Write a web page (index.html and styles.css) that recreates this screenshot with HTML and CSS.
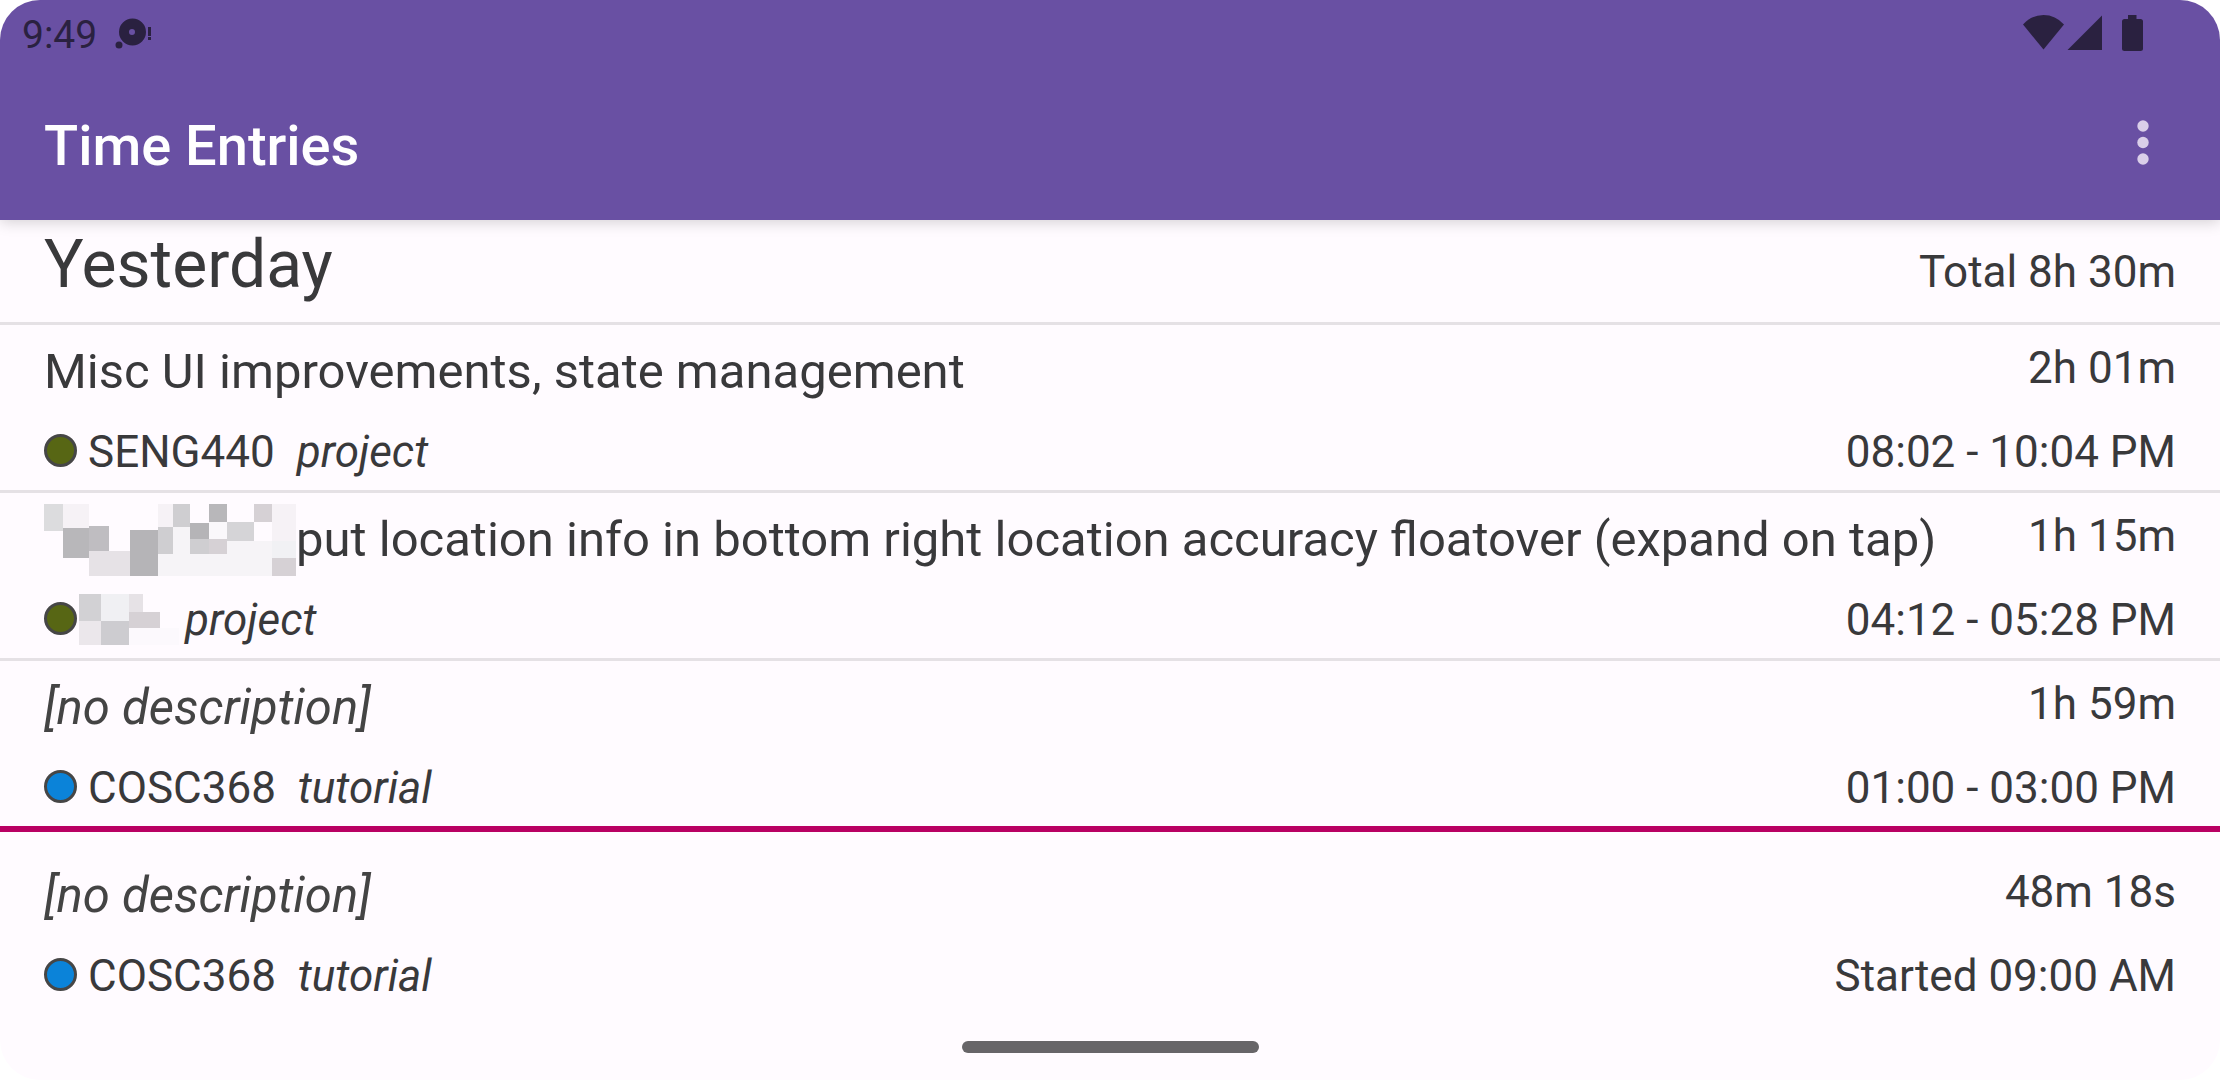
FILE: index.html
```html
<!DOCTYPE html>
<html lang="en">
<head>
<meta charset="utf-8">
<meta name="viewport" content="width=device-width, initial-scale=1">
<title>Time Entries</title>
<link rel="stylesheet" href="styles.css">
</head>
<body>
<div class="screen">
  <header class="top">
    <div class="status">
      <div class="status-left">
        <span class="clock">9:49</span>
        <svg class="notice" width="38" height="32" viewBox="0 0 38 32" aria-hidden="true">
          <path fill-rule="evenodd" d="M17.500 0.500a13.500 13.500 0 1 1 0 27a13.500 13.500 0 1 1 0-27zM17 11a3 3 0 1 0 0 6a3 3 0 1 0 0-6z"/>
          <circle cx="4" cy="27" r="3.500"/>
          <rect x="33" y="9" width="3" height="9"/>
          <rect x="33" y="19" width="3" height="3"/>
        </svg>
      </div>
      <svg class="system" width="122" height="38" viewBox="0 0 122 38" aria-hidden="true">
        <path d="M1 10.500Q9.500 1 21.500 1T42 10.500L21.500 35.500z"/>
        <path d="M45.500 36L80 1.500V36z"/>
        <path d="M106 1h8.500v4H118.500q2.500 0 2.500 2.500V34.500q0 2.500-2.500 2.500H102.500q-2.500 0-2.500-2.500V7.500q0-2.500 2.500-2.500H106z"/>
      </svg>
    </div>
    <div class="appbar">
      <h1 class="title">Time Entries</h1>
      <button class="menu" type="button" aria-label="More options">
        <svg width="12" height="46" viewBox="0 0 12 46" aria-hidden="true">
          <circle cx="6" cy="6" r="5.700"/><circle cx="6" cy="22.500" r="5.700"/><circle cx="6" cy="39" r="5.700"/>
        </svg>
      </button>
    </div>
  </header>

  <main class="content">
    <div class="day">
      <h2 class="day-name">Yesterday</h2>
      <span class="meta">Total 8h 30m</span>
    </div>
    <ul class="entries">
      <li class="entry">
        <div class="line">
          <span class="description">Misc UI improvements, state management</span>
          <span class="meta">2h 01m</span>
        </div>
        <div class="line">
          <span class="project"><span class="dot olive"></span><span class="code">SENG440</span><em class="tag">project</em></span>
          <span class="meta">08:02 - 10:04 PM</span>
        </div>
      </li>
      <li class="entry">
        <div class="line">
          <span class="description with-mosaic">
            <svg class="mosaic" width="252" height="72" viewBox="0 0 252 72" aria-hidden="true">
              <rect width="19" height="27" fill="#dcdcde"/>
              <rect x="19" width="26" height="24" fill="#f6f2f6"/>
              <rect x="19" y="24" width="26" height="30" fill="#b8b7ba"/>
              <rect x="45" y="22" width="20" height="25" fill="#bfbdc1"/>
              <rect x="45" y="47" width="41" height="25" fill="#e6e2e6"/>
              <rect x="86" y="26" width="28" height="46" fill="#b5b4b7"/>
              <rect x="114" width="15" height="23" fill="#f6f2f6"/>
              <rect x="114" y="23" width="15" height="27" fill="#cfced1"/>
              <rect x="129" width="17" height="23" fill="#cfced1"/>
              <rect x="129" y="23" width="17" height="27" fill="#f6f4f7"/>
              <rect x="114" y="50" width="114" height="22" fill="#f6f4f7"/>
              <rect x="146" y="19" width="19" height="16" fill="#b5b4b7"/>
              <rect x="146" y="35" width="19" height="15" fill="#cfced1"/>
              <rect x="165" width="18" height="18" fill="#b8b7ba"/>
              <rect x="165" y="18" width="18" height="17" fill="#faf8fb"/>
              <rect x="165" y="35" width="18" height="15" fill="#d6d1d5"/>
              <rect x="183" y="18" width="27" height="19" fill="#d5d4d7"/>
              <rect x="183" y="37" width="45" height="13" fill="#f6f4f7"/>
              <rect x="210" width="18" height="18" fill="#d6d1d5"/>
              <rect x="228" width="24" height="37" fill="#f6f2f6"/>
              <rect x="228" y="37" width="24" height="17" fill="#f1f1f4"/>
              <rect x="228" y="54" width="24" height="18" fill="#d6d1d5"/>
            </svg>
            <span>put location info in bottom right location accuracy floatover (expand on tap)</span>
          </span>
          <span class="meta">1h 15m</span>
        </div>
        <div class="line">
          <span class="project">
            <span class="dot olive"></span>
            <svg class="mosaic mosaic-code" width="100" height="51" viewBox="0 0 100 51" aria-hidden="true">
              <rect width="22" height="27" fill="#d2d1d4"/>
              <rect x="22" width="28" height="27" fill="#f0f0f3"/>
              <rect x="50" width="14" height="18" fill="#e6e2e6"/>
              <rect x="50" y="18" width="31" height="16" fill="#d6d1d5"/>
              <rect y="27" width="22" height="24" fill="#ebe7eb"/>
              <rect x="22" y="27" width="28" height="24" fill="#cdccd0"/>
              <rect x="50" y="34" width="50" height="17" fill="#fcf9fd"/>
            </svg>
            <em class="tag tag-near">project</em>
          </span>
          <span class="meta">04:12 - 05:28 PM</span>
        </div>
      </li>
      <li class="entry">
        <div class="line">
          <em class="description empty">[no description]</em>
          <span class="meta">1h 59m</span>
        </div>
        <div class="line">
          <span class="project"><span class="dot blue"></span><span class="code">COSC368</span><em class="tag">tutorial</em></span>
          <span class="meta">01:00 - 03:00 PM</span>
        </div>
      </li>
      <li class="entry current">
        <div class="line">
          <em class="description empty">[no description]</em>
          <span class="meta">48m 18s</span>
        </div>
        <div class="line">
          <span class="project"><span class="dot blue"></span><span class="code">COSC368</span><em class="tag">tutorial</em></span>
          <span class="meta">Started 09:00 AM</span>
        </div>
      </li>
    </ul>
  </main>
  <div class="gesture"><span class="handle"></span></div>
</div>
</body>
</html>
```

FILE: styles.css
```css
* {
  box-sizing: border-box;
}

body {
  margin: 0;
  background: #fff;
  color: #39393b;
  font-family: Roboto, sans-serif;
  font-size: 44px;
  line-height: 52px;
}

.screen {
  display: flex;
  flex-direction: column;
  min-height: 100vh;
  overflow: hidden;
  border-radius: 40px;
  background: #fffbff;
}

.top {
  background: #6950a3;
  box-shadow: 0 2px 14px rgba(0, 0, 0, 0.18);
}

.status {
  display: flex;
  justify-content: space-between;
  align-items: flex-start;
  height: 66px;
  padding: 14px 76px 0 22px;
  color: #2a2140;
  fill: #2a2140;
}

.status-left {
  display: flex;
  gap: 18px;
}

.clock {
  font-size: 39px;
  line-height: 42px;
}

.notice {
  margin-top: 4px;
}

.appbar {
  display: flex;
  justify-content: space-between;
  align-items: center;
  height: 154px;
  padding: 0 50px 0 44px;
}

.title {
  margin: 0;
  padding-top: 6px;
  color: #fff;
  font-size: 56px;
  font-weight: 500;
  line-height: 64px;
}

.menu {
  display: flex;
  justify-content: center;
  width: 54px;
  padding: 0;
  border: 0;
  background: none;
  fill: #dacfe9;
}

.day {
  display: flex;
  justify-content: space-between;
  align-items: baseline;
  padding: 6px 44px 18px;
}

.day-name {
  margin: 0;
  font-size: 66px;
  font-weight: 400;
  line-height: 78px;
}

.entries {
  margin: 0;
  padding: 0;
  list-style: none;
}

.entry {
  display: flex;
  flex-direction: column;
  gap: 24px;
  padding: 17px 44px 12px;
  border-top: 3px solid #e5e1e5;
}

.entry.current {
  padding-top: 34px;
  border-top: 6px solid #b90063;
}

.line {
  display: flex;
  justify-content: space-between;
  align-items: flex-start;
  gap: 44px;
}

.description {
  font-size: 49px;
  line-height: 60px;
}

.description.empty {
  color: #444;
}

.with-mosaic {
  display: flex;
  align-items: center;
}

.mosaic {
  flex: none;
  margin: -6px 0;
  shape-rendering: crispEdges;
}

.mosaic-code {
  align-self: flex-start;
  margin: 0 0 0 2px;
}

.meta {
  text-align: right;
  white-space: nowrap;
}

.project {
  display: flex;
  align-items: baseline;
}

.dot {
  width: 33px;
  height: 33px;
  border: 3px solid #464646;
  border-radius: 50%;
}

.olive {
  background: #576614;
}

.blue {
  background: #0b83d9;
}

.code {
  margin-left: 11px;
}

.tag {
  margin-left: 22px;
}

.tag-near {
  margin-left: 6px;
}

.gesture {
  display: flex;
  justify-content: center;
  margin-top: auto;
  padding-bottom: 27px;
}

.handle {
  width: 297px;
  height: 12px;
  border-radius: 6px;
  background: #676568;
}
```
